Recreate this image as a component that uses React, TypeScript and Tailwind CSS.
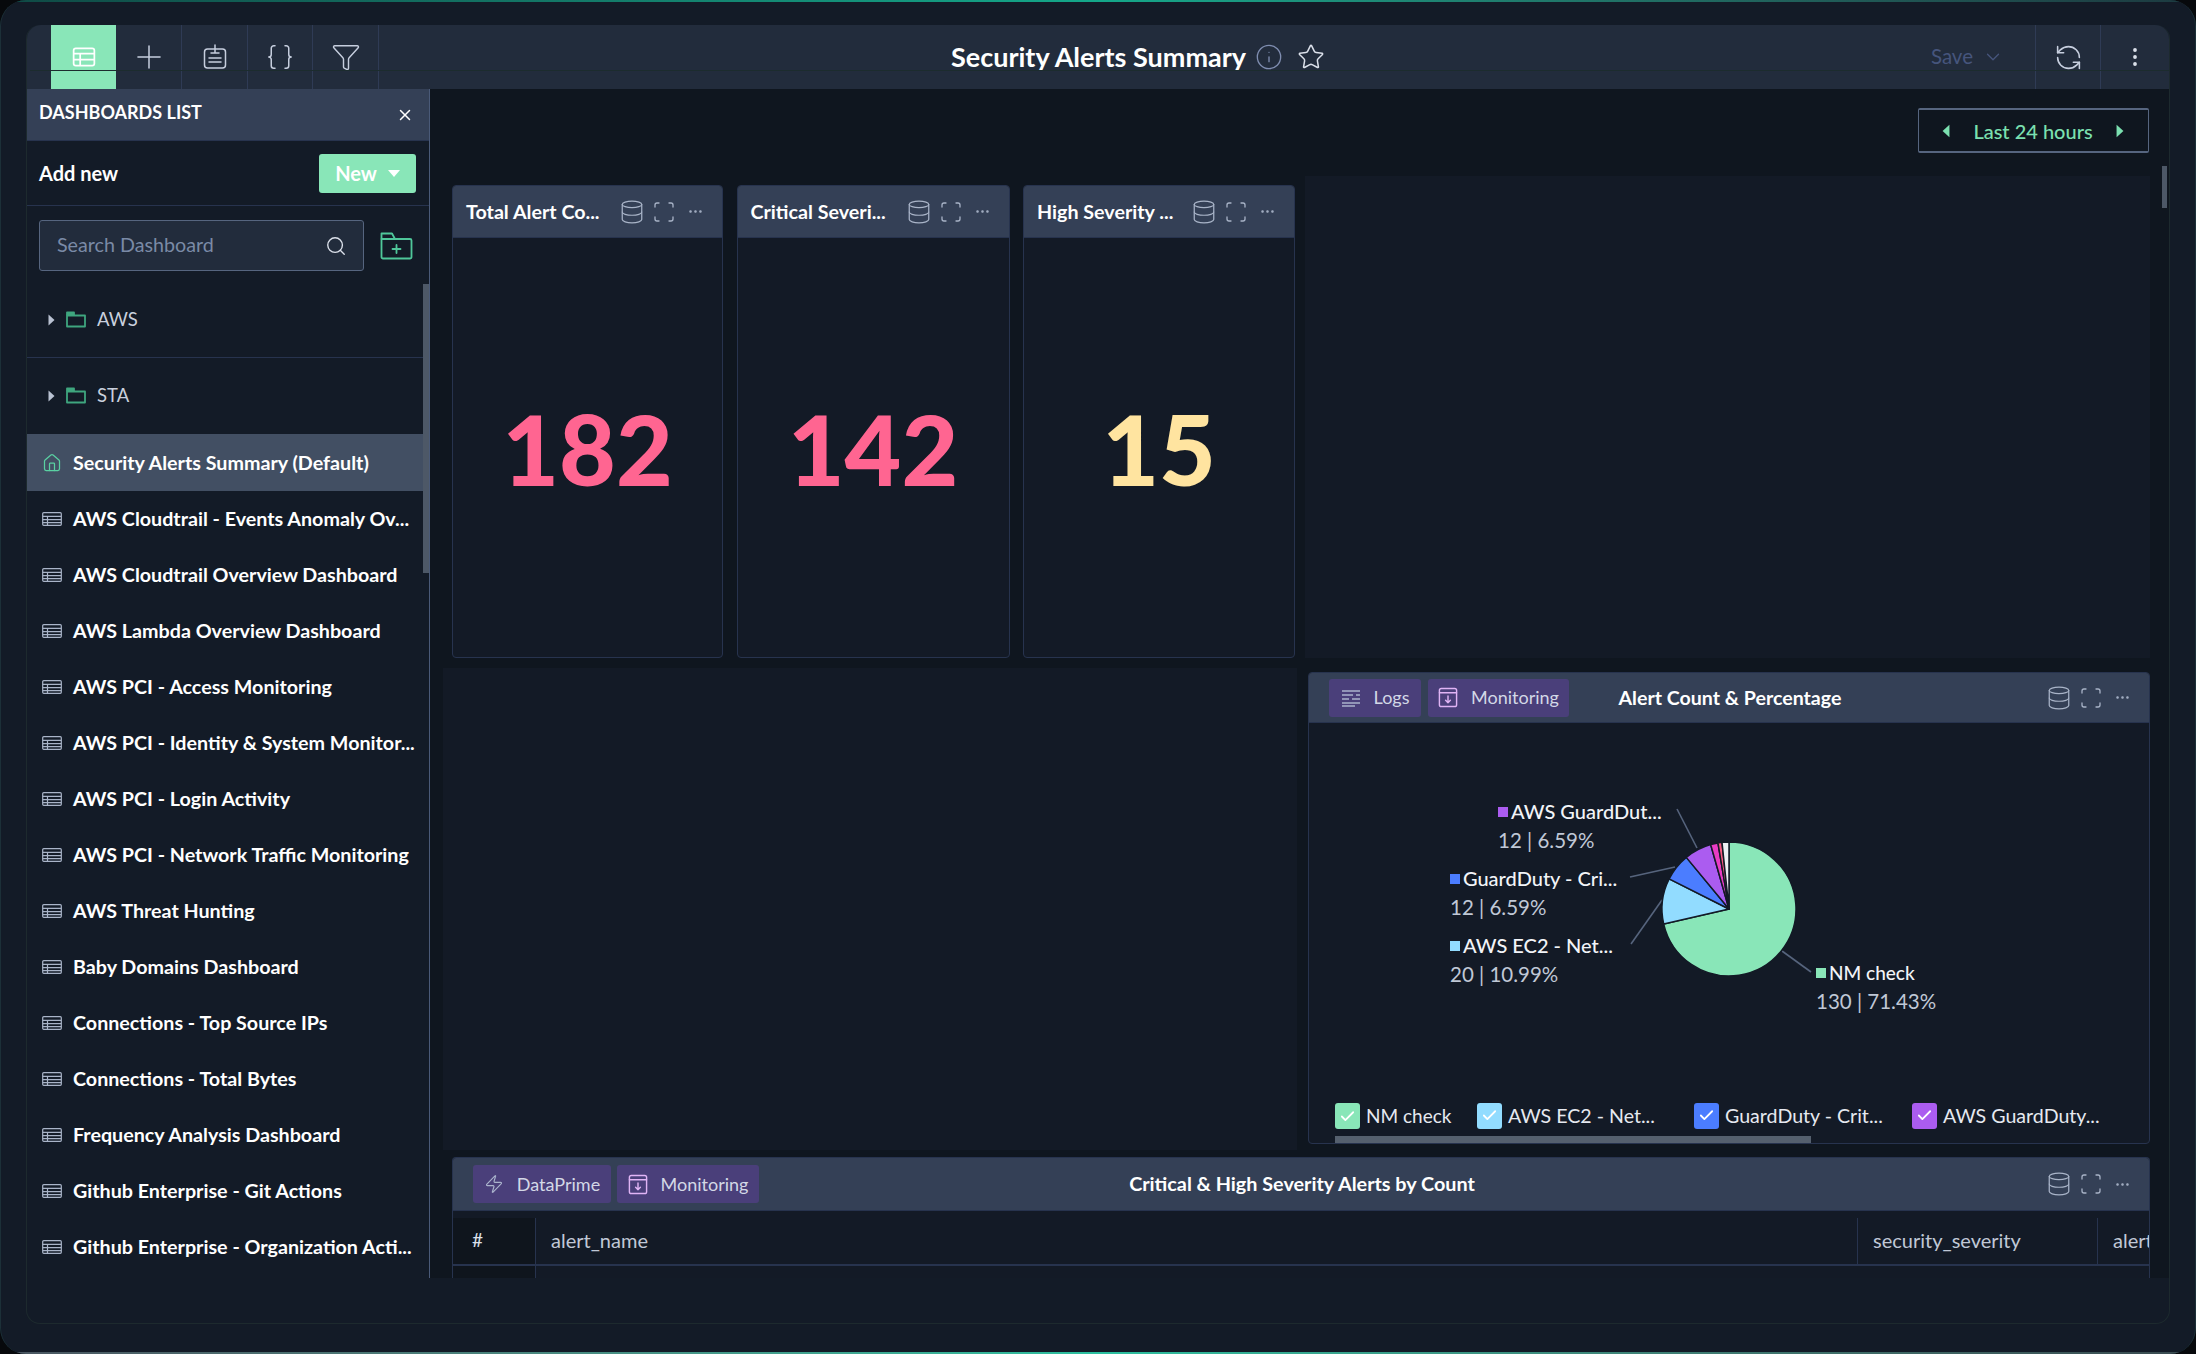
import React from "react";
import { Plus, Braces, Funnel, Info, Star, RefreshCcw, EllipsisVertical, ChevronDown, Search, House, Zap, X, Database, Scan, Ellipsis, Check } from "lucide-react";

const font = { fontFamily: "Lato, 'Noto Sans', sans-serif" };

function TableIcon({ className = "" }: { className?: string }) {
  return (
    <svg viewBox="0 0 20 14" className={className} fill="none" stroke="currentColor" strokeWidth="1.2">
      <rect x="0.7" y="0.7" width="18.6" height="12.6" rx="1" />
      <path d="M0.7 4.4H19.3M0.7 7.6H19.3M0.7 10.6H19.3M5.5 4.4V13.3" />
    </svg>
  );
}
function TabTableIcon() {
  return (
    <svg viewBox="0 0 22 22" className="w-[24px] h-[24px]" fill="none" stroke="#ffffff" strokeWidth="1.6">
      <rect x="1.5" y="3" width="19" height="16" rx="2" />
      <path d="M1.5 8H20.5M1.5 13.5H20.5M7.5 8V19" />
    </svg>
  );
}
function ClipIcon() {
  return (
    <svg viewBox="0 0 26 26" className="w-[28px] h-[26px]" fill="none" stroke="#c6cede" strokeWidth="1.5" strokeLinecap="round">
      <rect x="2.5" y="5" width="21" height="19" rx="3" />
      <path d="M13 1V9M9 9H17M7 14H19M7 18H19" />
    </svg>
  );
}
function LogsIcon() {
  return (
    <svg viewBox="0 0 20 20" className="w-[20px] h-[20px]" fill="none" stroke="#aab3cc" strokeWidth="1.5">
      <path d="M1 3H19M1 7H12M15 7H19M1 11H8M11 11H19M1 15H19M1 18H14" />
    </svg>
  );
}
function MonitorIcon() {
  return (
    <svg viewBox="0 0 20 22" className="w-[20px] h-[21px]" fill="none" stroke="#e0b4f5" strokeWidth="1.5" strokeLinecap="round" strokeLinejoin="round">
      <rect x="1" y="1.5" width="18" height="19" rx="2" />
      <path d="M1 6H19M10 9.5V16.5M7.5 14L10 16.5L12.5 14" />
    </svg>
  );
}
function Caret() {
  return (
    <svg viewBox="0 0 7 12" className="w-[7px] h-[12px] shrink-0" fill="#b9c2d2">
      <path d="M0.5 0.5L6.5 6L0.5 11.5Z" />
    </svg>
  );
}
function FolderIcon() {
  return (
    <svg viewBox="0 0 20 17" className="w-[20px] h-[17px] shrink-0" fill="none" stroke="#3fa67f" strokeWidth="1.8" strokeLinejoin="round">
      <path d="M1 4.5V15.5H19V4.5Z" />
      <path d="M1 4.5V1.5H8V4.5" fill="#3fa67f" />
    </svg>
  );
}
function CardIcons() {
  return (
    <div className="flex items-center text-[#a9b4c8]">
      <Database className="w-[26px] h-[26px]" strokeWidth={1.15} />
      <Scan className="w-[24px] h-[24px] ml-[7px]" strokeWidth={1.3} />
      <Ellipsis className="w-[17px] h-[17px] ml-[11px]" strokeWidth={1.6} />
    </div>
  );
}
function StatCard({ title, value, color }: { title: string; value: string; color: string }) {
  return (
    <div className="flex flex-col border border-[#27334e] rounded-[4px] bg-[#131a26] overflow-hidden">
      <div className="h-[52px] shrink-0 bg-[#344056] border-b border-[#27334e] flex items-center justify-between pl-[13px] pr-[18px]">
        <span className="text-[19.700px] font-bold text-white whitespace-nowrap">{title}</span>
        <CardIcons />
      </div>
      <div className="flex-1 flex items-center justify-center">
        <span className={`text-[98px] leading-none font-black ${color}`}>{value}</span>
      </div>
    </div>
  );
}
function QueryTag({ icon, label, w }: { icon: React.ReactNode; label: string; w: string }) {
  return (
    <div className={`h-[38px] ${w} bg-[#4a3f7a] rounded-[3px] flex items-center justify-center gap-[13px] text-[18px] text-[#d3d8e6]`}>
      {icon}
      <span>{label}</span>
    </div>
  );
}

function pt(deg: number, r: number, cx: number, cy: number) {
  const a = ((deg - 90) * Math.PI) / 180;
  return [cx + r * Math.cos(a), cy + r * Math.sin(a)];
}
function slice(from: number, to: number) {
  const cx = 1729, cy = 909, r = 67;
  const [x1, y1] = pt(from, r, cx, cy);
  const [x2, y2] = pt(to, r, cx, cy);
  return `M${cx} ${cy}L${x1} ${y1}A${r} ${r} 0 ${to - from > 180 ? 1 : 0} 1 ${x2} ${y2}Z`;
}
const slices = [
  [0, 257, "#89e6b8"],
  [257, 296.7, "#92dcff"],
  [296.7, 320.4, "#4b7dff"],
  [320.4, 344.1, "#ab5cf0"],
  [344.1, 350.5, "#e93cc4"],
  [350.5, 354, "#f4587f"],
  [354, 360, "#eef0f4"],
] as [number, number, string][];

function PieChart() {
  const labels = [
    [1498, 812, 841, "#ab5cf0", "AWS GuardDut...", "12 | 6.59%", 20],
    [1450, 879, 908, "#4b7dff", "GuardDuty - Cri...", "12 | 6.59%", 20],
    [1450, 946, 975, "#92dcff", "AWS EC2 - Net...", "20 | 10.99%", 20],
    [1816, 973, 1002, "#89e6b8", "NM check", "130 | 71.43%", 19],
  ] as [number, number, number, string, string, string, number][];
  return (
    <svg viewBox="1309 723 840 375" className="w-[840px] h-[375px] block shrink-0" style={font}>
      {[
        "M1677 809L1697 848",
        "M1630 877L1675 867",
        "M1631 944L1662 900",
        "M1782 951L1811 972",
      ].map((d) => (
        <path key={d} d={d} stroke="#56647d" strokeWidth="1.6" fill="none" />
      ))}
      {slices.map(([a, b, c]) => (
        <path key={a} d={slice(a, b)} fill={c} stroke="#131a26" strokeWidth="1.5" strokeLinejoin="round" />
      ))}
      {labels.map(([x, y1, y2, c, t, s, fs]) => (
        <g key={t}>
          <rect x={x} y={y1 - 5} width="10" height="10" fill={c} />
          <text x={x + 13} y={y1 + 7} fontSize={fs} fontWeight="500" fill="#f2f4f8">{t}</text>
          <text x={x} y={y2 + 7} fontSize="20.5" fill="#c0c8d6">{s}</text>
        </g>
      ))}
    </svg>
  );
}
function Legend({ color, label, w, size }: { color: string; label: string; w: string; size: string }) {
  return (
    <div className={`flex items-center gap-[6px] ${w} shrink-0`}>
      <span className={`w-[25px] h-[26px] rounded-[3px] flex items-center justify-center ${color}`}>
        <Check className="w-[17px] h-[17px] text-white" strokeWidth={2.5} />
      </span>
      <span className={`${size} text-[#e6e9f0] whitespace-nowrap`}>{label}</span>
    </div>
  );
}

const items = [
  "AWS Cloudtrail - Events Anomaly Ov...",
  "AWS Cloudtrail Overview Dashboard",
  "AWS Lambda Overview Dashboard",
  "AWS PCI - Access Monitoring",
  "AWS PCI - Identity & System Monitor...",
  "AWS PCI - Login Activity",
  "AWS PCI - Network Traffic Monitoring",
  "AWS Threat Hunting",
  "Baby Domains Dashboard",
  "Connections - Top Source IPs",
  "Connections - Total Bytes",
  "Frequency Analysis Dashboard",
  "Github Enterprise - Git Actions",
  "Github Enterprise - Organization Acti...",
];

export default function App() {
  return (
    <div className="w-[2196px] h-[1354px] bg-[#07090c]" style={font}>
      <div className="relative w-full h-full rounded-[26px] bg-[#131b27] border-x border-[#1c3038] overflow-hidden pt-[25px] pl-[25px]">
        <div className="absolute top-0 left-0 right-0 h-[2px] bg-gradient-to-r from-[#0f4a45] via-[#14a88a] to-[#1c3a40]" />
        <div className="absolute bottom-0 left-0 right-0 h-[2px] bg-gradient-to-r from-[#4a5560] via-[#2bc0a0] to-[#3a4a50]" />

        <div className="relative w-[2144px] h-[1299px] rounded-[14px] border-b border-x border-[#1d2a2e] flex flex-col">
          {/* top bar */}
          <div className="relative h-[64px] shrink-0 bg-[#222c3c] rounded-t-[14px] flex items-stretch pl-[24px] text-[#c6cede]">
            <div className="w-[65px] bg-[#89e6b8] flex items-center justify-center"><TabTableIcon /></div>
            <div className="w-[66px] border-r border-[#2f3b55] flex items-center justify-center"><Plus className="w-[38px] h-[38px]" strokeWidth={0.95} /></div>
            <div className="w-[66px] border-r border-[#2f3b55] flex items-center justify-center"><ClipIcon /></div>
            <div className="w-[65px] border-r border-[#2f3b55] flex items-center justify-center"><Braces className="w-[30px] h-[30px]" strokeWidth={1.2} /></div>
            <div className="w-[66px] border-r border-[#2f3b55] flex items-center justify-center"><Funnel className="w-[30px] h-[30px]" strokeWidth={1.15} /></div>
            <div className="flex-1 flex items-center pl-[572px]">
              <span className="text-[27px] font-bold text-white whitespace-nowrap">Security Alerts Summary</span>
              <Info className="w-[28px] h-[28px] ml-[9px] text-[#7f8db0]" strokeWidth={1.15} />
              <Star className="w-[28px] h-[28px] ml-[14px] text-[#dbe0ea]" strokeWidth={1.3} />
            </div>
            <div className="flex items-center pr-[31px] gap-[9px] text-[#46557c]">
              <span className="text-[20.500px] pb-[1px]">Save</span>
              <ChevronDown className="w-[22px] h-[22px]" strokeWidth={1.4} />
            </div>
            <div className="w-[66px] border-l border-r border-[#2f3b55] flex items-center justify-center"><RefreshCcw className="w-[29px] h-[29px]" strokeWidth={1.3} /></div>
            <div className="w-[68px] flex items-center justify-center"><EllipsisVertical className="w-[24px] h-[24px] text-[#dbe0ea]" strokeWidth={1.8} /></div>
            <div className="absolute left-[3px] right-0 top-[45px] h-px bg-[#1c2c2e]" />
          </div>

          {/* body */}
          <div className="flex h-[1189px] shrink-0">
            {/* sidebar */}
            <div className="relative w-[403px] shrink-0 border-r border-[#4a5a78] bg-[#131b27] flex flex-col overflow-hidden">
              <div className="h-[52px] shrink-0 bg-[#344056] border-b border-[#27334e] flex items-start justify-between pl-[12px] pr-[15px] pt-[11px]">
                <span className="text-[18px] leading-[24px] font-bold text-white">DASHBOARDS LIST</span>
                <X className="w-[18px] h-[18px] mt-[6px] text-white" strokeWidth={2} />
              </div>
              <div className="h-[65px] shrink-0 border-b border-[#27334e] flex items-center justify-between pl-[12px] pr-[13px]">
                <span className="text-[20px] font-bold text-white">Add new</span>
                <div className="w-[97px] h-[39px] rounded-[3px] bg-[#89e6b8] flex items-center justify-center gap-[11px] text-white">
                  <span className="text-[20px] font-bold">New</span>
                  <svg viewBox="0 0 12 7" className="w-[12px] h-[7px]" fill="#ffffff"><path d="M0 0H12L6 7Z" /></svg>
                </div>
              </div>
              <div className="shrink-0 pt-[14px] pl-[12px] flex items-center gap-[16px]">
                <div className="w-[325px] h-[51px] bg-[#222c3c] border border-[#56657f] rounded-[3px] flex items-center justify-between pl-[17px] pr-[16px]">
                  <span className="text-[19.700px] text-[#7a8aa6] pb-[2px]">Search Dashboard</span>
                  <Search className="w-[22px] h-[22px] text-[#dbe0ea]" strokeWidth={1.5} />
                </div>
                <svg viewBox="0 0 33 28" className="w-[33px] h-[28px]" fill="none" stroke="#4fc79a" strokeWidth="1.8" strokeLinejoin="round" strokeLinecap="round">
                  <path d="M1.5 8V1.5H12L15 7H30A1.5 1.5 0 0 1 31.5 8.5V25A1.5 1.5 0 0 1 30 26.500H3A1.5 1.5 0 0 1 1.500 25Z" />
                  <path d="M1.500 7H15M16.500 13V21M12.500 17H20.500" />
                </svg>
              </div>
              <div className="h-[87px] shrink-0 border-b border-[#27334e] flex items-center pl-[21px] gap-[11px] pt-[11px]">
                <Caret />
                <FolderIcon />
                <span className="text-[18.500px] text-[#c9d0dd]">AWS</span>
              </div>
              <div className="h-[75px] shrink-0 flex items-center pl-[21px] gap-[11px]">
                <Caret />
                <FolderIcon />
                <span className="text-[18.500px] text-[#c9d0dd]">STA</span>
              </div>
              <div className="h-[57px] mt-[1px] shrink-0 bg-[#424f63] flex items-center pl-[15px] gap-[11px]">
                <House className="w-[20px] h-[20px] text-[#5ad0a2]" strokeWidth={1.5} />
                <span className="text-[19.700px] font-bold text-white whitespace-nowrap">Security Alerts Summary (Default)</span>
              </div>
              {items.map((t) => (
                <div key={t} className="h-[56px] shrink-0 flex items-center pl-[15px] gap-[11px]">
                  <TableIcon className="w-[20px] h-[14px] shrink-0 text-[#a9b4c8]" />
                  <span className="text-[19.700px] font-bold text-white whitespace-nowrap">{t}</span>
                </div>
              ))}
              <div className="absolute right-0 top-[195px] w-[6px] h-[289px] bg-[#4d5867]" />
            </div>

            {/* main */}
            <div className="relative flex-1 bg-[#0f161f] flex flex-col overflow-hidden">
              <div className="h-[64px] shrink-0 pt-[19px] pr-[20px] flex justify-end">
                <div className="w-[231px] h-[45px] border border-[#56657f] border-t-2 border-b-2 rounded-[2px] flex items-center justify-between pl-[23px] pr-[24px] text-[#7be0b0]">
                  <svg viewBox="0 0 7 12" className="w-[8px] h-[14px]" fill="currentColor"><path d="M6.5 0.5L0.5 6L6.5 11.5Z" /></svg>
                  <span className="text-[20px] font-medium pt-[1px]">Last 24 hours</span>
                  <svg viewBox="0 0 7 12" className="w-[8px] h-[14px]" fill="currentColor"><path d="M0.5 0.5L6.5 6L0.5 11.5Z" /></svg>
                </div>
              </div>
              {/* row 1 */}
              <div className="h-[505px] shrink-0 pt-[23px] flex">
                <div className="w-[875px] shrink-0 pl-[22px] pt-[9px]">
                  <div className="grid grid-cols-[271px_273px_272px] gap-[13.500px] h-[473px]">
                    <StatCard title="Total Alert Co..." value="182" color="text-[#ff6591]" />
                    <StatCard title="Critical Severi..." value="142" color="text-[#ff6591]" />
                    <StatCard title="High Severity ..." value="15" color="text-[#ffe4a0]" />
                  </div>
                </div>
                <div className="w-[845px] shrink-0 bg-[#131a26]" />
              </div>
              {/* row 2 */}
              <div className="h-[482px] shrink-0 mt-[10px] flex">
                <div className="w-[854px] ml-[13px] shrink-0 bg-[#131a26]" />
                <div className="w-[842px] ml-[11px] mt-[4px] h-[472px] shrink-0 border border-[#27334e] rounded-[4px] bg-[#131a26] flex flex-col overflow-hidden">
                  <div className="h-[50px] shrink-0 bg-[#344056] border-b border-[#27334e] grid grid-cols-[1fr_auto_1fr] items-center pl-[20px] pr-[18px]">
                    <div className="flex gap-[7px]">
                      <QueryTag icon={<LogsIcon />} label="Logs" w="w-[92px]" />
                      <QueryTag icon={<MonitorIcon />} label="Monitoring" w="w-[141px]" />
                    </div>
                    <span className="text-[19.600px] font-bold text-white whitespace-nowrap">Alert Count &amp; Percentage</span>
                    <div className="justify-self-end"><CardIcons /></div>
                  </div>
                  <PieChart />
                  <div className="flex-1 flex items-center pl-[26px] pb-[2px]">
                    <Legend color="bg-[#89e6b8]" label="NM check" w="w-[142px]" size="text-[19px]" />
                    <Legend color="bg-[#92dcff]" label="AWS EC2 - Net..." w="w-[217px]" size="text-[19.600px]" />
                    <Legend color="bg-[#4b7dff]" label="GuardDuty - Crit..." w="w-[218px]" size="text-[19.600px]" />
                    <Legend color="bg-[#ab5cf0]" label="AWS GuardDuty..." w="w-[190px]" size="text-[19.600px]" />
                  </div>
                  <div className="h-[7px] shrink-0 ml-[26px] w-[476px] bg-[#55606e]" />
                </div>
              </div>
              {/* row 3 */}
              <div className="mt-[7px] ml-[22px] w-[1698px] flex-1 border border-[#27334e] border-b-0 rounded-t-[4px] bg-[#131a26] flex flex-col overflow-hidden">
                <div className="h-[53px] shrink-0 bg-[#344056] border-b border-[#27334e] grid grid-cols-[1fr_auto_1fr] items-center pl-[20px] pr-[18px]">
                  <div className="flex gap-[6px]">
                    <QueryTag icon={<Zap className="w-[20px] h-[24px] text-[#aab3cc]" strokeWidth={1.4} />} label="DataPrime" w="w-[138px]" />
                    <QueryTag icon={<MonitorIcon />} label="Monitoring" w="w-[142px]" />
                  </div>
                  <span className="text-[19.800px] font-bold text-white whitespace-nowrap">Critical &amp; High Severity Alerts by Count</span>
                  <div className="justify-self-end"><CardIcons /></div>
                </div>
                <div className="flex flex-1">
                  <div className="w-[83px] shrink-0 bg-[#0f151d] border-r border-[#27334e] mt-[7px]">
                    <div className="h-[48px] border-b-2 border-[#27334e] pl-[19px] pb-[2px] flex items-center text-[19px] text-[#dbe0ea]">#</div>
                  </div>
                  <div className="w-[1322px] shrink-0 flex flex-col pt-[7px]">
                    <div className="h-[48px] border-b-2 border-[#27334e] border-r pl-[15px] pb-[2px] flex items-center text-[20px] text-[#c0c8d6]">alert_name</div>
                  </div>
                  <div className="w-[240px] shrink-0 flex flex-col pt-[7px]">
                    <div className="h-[48px] border-b-2 border-[#27334e] border-r pl-[15px] pb-[2px] flex items-center text-[20px] text-[#c0c8d6]">security_severity</div>
                  </div>
                  <div className="flex-1 min-w-0 overflow-hidden flex flex-col pt-[7px]">
                    <div className="h-[48px] border-b-2 border-[#27334e] pl-[15px] pb-[2px] flex items-center text-[20px] text-[#c0c8d6] whitespace-nowrap">alert</div>
                  </div>
                </div>
              </div>
              <div className="absolute right-[2px] top-[77px] w-[5px] h-[42px] bg-[#4d5867]" />
            </div>
          </div>
        </div>
      </div>
    </div>
  );
}
